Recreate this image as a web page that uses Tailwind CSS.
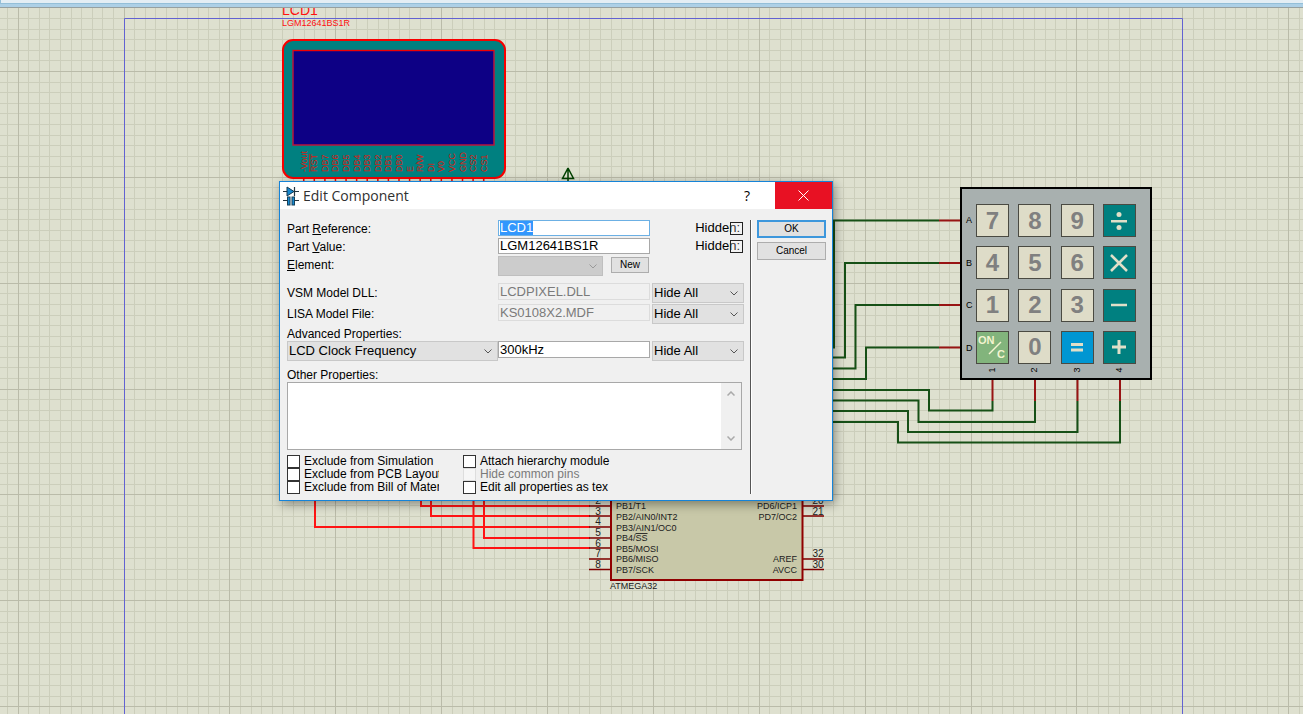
<!DOCTYPE html>
<html lang="en">
<head>
<meta charset="utf-8">
<title>Edit Component</title>
<script src="https://cdn.jsdelivr.net/npm/@tailwindcss/browser@4"></script>
</head>
<body class="flex h-screen flex-col overflow-hidden bg-[#dee0cf] font-['Liberation_Sans',sans-serif] text-black">
<header class="relative z-10 h-2 shrink-0 border-b border-[#96a0a0] bg-[#add0e6]"><div class="h-1 border-b border-l border-[#94bfd8] bg-[#e4eef4]"></div></header>

<main class="relative min-h-0 flex-1">
  <!-- schematic sheet: page coordinates, pulled up under the header strip -->
  <svg class="absolute inset-x-0 -top-2 h-[calc(100%+8px)] w-full" font-family="Liberation Sans, sans-serif">
    <g id="grid" shape-rendering="crispEdges"></g>
    <path d="M124.500 2000V18.500H1182.500V2000" fill="none" stroke="#6262d2"/>

    <!-- LCD -->
    <g fill="#ff1010">
      <text x="282" y="15" font-size="14">LCD1</text>
      <text x="282" y="26" font-size="9">LGM12641BS1R</text>
    </g>
    <rect x="283" y="40" width="222" height="138" rx="10" fill="#008080" stroke="#f80000" stroke-width="2"/>
    <rect x="293" y="50.500" width="201" height="94.500" fill="#0d0085" stroke="#b8143c" stroke-width="1.500"/>
    <path d="M293 50.500H494" stroke="#f00000"/>
    <g id="lcdpins" fill="#d81c14" font-size="9"></g>

    <!-- power terminal -->
    <path d="M568 182V168L562.500 178.500H573.500L568 168" fill="none" stroke="#004000" stroke-width="1.500"/>

    <!-- data wires to the controller -->
    <g fill="none" stroke="#ff1414" stroke-width="2">
      <path d="M421 495V506H590"/>
      <path d="M431 495V516H590" />
      <path d="M315 495V527H590"/>
      <path d="M484 495V538H590"/>
      <path d="M473.500 495V548H590"/>
    </g>
    <path d="M589 506H611M589 516H611M589 527H611M589 538H611M589 548H611M589 559H611M589 569.500H611M803 506H824M803 516H824M803 559H824M803 569.500H824" stroke="#800000" stroke-width="1.500"/>
    <rect x="611" y="480" width="191.500" height="100" fill="#c8c8a8" stroke="#900000" stroke-width="2"/>
    <g font-size="9" fill="#202020">
      <text x="616" y="509">PB1/T1</text>
      <text x="616" y="520">PB2/AIN0/INT2</text>
      <text x="616" y="531">PB3/AIN1/OC0</text>
      <text x="616" y="541">PB4/<tspan text-decoration="overline">SS</tspan></text>
      <text x="616" y="552">PB5/MOSI</text>
      <text x="616" y="562">PB6/MISO</text>
      <text x="616" y="573">PB7/SCK</text>
      <text x="610" y="589">ATMEGA32</text>
      <g text-anchor="end">
        <text x="797" y="509">PD6/ICP1</text>
        <text x="797" y="520">PD7/OC2</text>
        <text x="797" y="562">AREF</text>
        <text x="797" y="573">AVCC</text>
      </g>
      <g text-anchor="middle" font-size="10">
        <text x="598" y="504">2</text><text x="598" y="515">3</text><text x="598" y="525">4</text><text x="598" y="536">5</text><text x="598" y="547">6</text><text x="598" y="557">7</text><text x="598" y="568">8</text>
        <text x="818" y="504">20</text><text x="818" y="515">21</text><text x="818" y="557">32</text><text x="818" y="568">30</text>
      </g>
    </g>

    <!-- keypad wires -->
    <g fill="none" stroke="#165016" stroke-width="2">
      <path d="M939 220.500H834V347.500H825"/>
      <path d="M939 263H845V357.500H825"/>
      <path d="M939 305H855.500V368.500H825"/>
      <path d="M939 347.500H866V379H825"/>
      <path d="M825 390H929V410.500H992.500V401"/>
      <path d="M825 400.500H918.500V422H1035V401"/>
      <path d="M825 411H908V432H1077.500V401"/>
      <path d="M825 422H898V442.500H1120V401"/>
    </g>
    <path d="M939 220.500H961M939 263H961M939 305H961M939 347.500H961M992.500 379V401M1035 379V401M1077.500 379V401M1120 379V401" stroke="#981414" stroke-width="2"/>
  </svg>

  <!-- keypad -->
  <section aria-label="Keypad" class="absolute left-[960px] top-[179px] flex h-[193px] w-48 flex-col border-2 border-black bg-[#a8b0af] pt-[15px] text-[9px]">
    <div class="flex">
      <div class="flex h-40 w-3.5 flex-col justify-between pl-1 leading-8"><span>A</span><span>B</span><span>C</span><span>D</span></div>
      <div class="grid h-40 w-40 grid-cols-[repeat(4,33px)] grid-rows-[repeat(4,33px)] place-content-between text-2xl font-bold leading-none text-[#808080] *:flex *:items-center *:justify-center *:border *:border-[#4a4a42]">
        <button class="bg-[#dedcc8]">7</button><button class="bg-[#dedcc8]">8</button><button class="bg-[#dedcc8]">9</button>
        <button class="bg-[#008080]" aria-label="Divide"><svg width="18" height="20" viewBox="0 0 18 20" fill="#e0dfc8"><circle cx="9" cy="3.500" r="2.500"/><rect x="1" y="9" width="16" height="2.500"/><circle cx="9" cy="16.500" r="2.500"/></svg></button>
        <button class="bg-[#dedcc8]">4</button><button class="bg-[#dedcc8]">5</button><button class="bg-[#dedcc8]">6</button>
        <button class="bg-[#008080]" aria-label="Multiply"><svg width="18" height="18" viewBox="0 0 18 18"><path d="M1 1L17 17M17 1L1 17" stroke="#e0dfc8" stroke-width="2.500"/></svg></button>
        <button class="bg-[#dedcc8]">1</button><button class="bg-[#dedcc8]">2</button><button class="bg-[#dedcc8]">3</button>
        <button class="bg-[#008080]" aria-label="Subtract"><svg width="18" height="18" viewBox="0 0 18 18"><path d="M1 9H17" stroke="#e0dfc8" stroke-width="2.500"/></svg></button>
        <button class="bg-[#82b47c]" aria-label="On / Clear"><svg width="31" height="31" viewBox="0 0 31 31" fill="#f4f4d0" font-family="Liberation Sans, sans-serif"><text x="1" y="12" font-size="11" font-weight="bold">ON</text><text x="20" y="26" font-size="11" font-weight="bold">C</text><path d="M12 22L24 10" stroke="#f4f4d0" stroke-width="1.500"/></svg></button>
        <button class="bg-[#dedcc8]">0</button>
        <button class="bg-[#0096d2]" aria-label="Equals"><svg width="12" height="12" viewBox="0 0 12 12"><path d="M0 3.500H12M0 9H12" stroke="#e0dfc8" stroke-width="3"/></svg></button>
        <button class="bg-[#008080]" aria-label="Add"><svg width="16" height="16" viewBox="0 0 16 16"><path d="M1 8H15M8 1V15" stroke="#e0dfc8" stroke-width="3"/></svg></button>
      </div>
    </div>
    <div class="ml-3.5 flex w-40 justify-between *:flex *:h-3 *:w-[33px] *:-rotate-90 *:items-center *:justify-center"><span>1</span><span>2</span><span>3</span><span>4</span></div>
  </section>

  <!-- dialog window -->
  <form role="dialog" aria-labelledby="title" class="absolute left-[279px] top-[173px] flex h-80 w-[554px] flex-col border border-[#1583d8] bg-[#f0f0f0] text-[13px] leading-4 shadow-[2px_3px_10px_rgba(0,0,0,0.4)]">
    <div class="flex h-[27px] shrink-0 items-center bg-white pl-[3px]">
      <svg width="16" height="20" viewBox="0 0 16 20" aria-hidden="true"><path d="M0 5.500H16M0 14.500H16M11.500 1V10" stroke="#243540" stroke-width="1.200"/><path d="M4 1L11 5.500L4 10Z" fill="#1688d0" stroke="#123850"/><path d="M8 11V19" stroke="#fff" stroke-width="3"/><rect x="4.500" y="11" width="2.500" height="8" fill="#1688d0" stroke="#174058"/><rect x="9" y="11" width="2.500" height="8" fill="#1688d0" stroke="#174058"/></svg>
      <h1 id="title" class="ml-1 flex-1 font-['Open_Sans',sans-serif] text-sm leading-5 text-[#303030]">Edit Component</h1>
      <button type="button" aria-label="Help" class="h-full w-14 font-['Open_Sans',sans-serif] text-sm">?</button>
      <button type="button" aria-label="Close" class="flex h-full w-[57px] items-center justify-center bg-[#e81123]"><svg width="11" height="11" viewBox="0 0 11 11"><path d="M.5 .5L10.500 10.500M10.500 .5L.5 10.500" stroke="#fff"/></svg></button>
    </div>

    <div class="flex flex-1 pb-1.5 pl-[7px] pr-1.5 pt-[11px]">
      <div class="w-[457px]">
        <div class="grid grid-cols-[211px_152px_1fr] items-start">
          <label for="ref" class="pt-px text-xs leading-4">Part <u>R</u>eference:</label>
          <input id="ref" value="LCD1" class="mb-0.5 h-4 w-full border border-[#6cb0e4] bg-white px-px outline-none selection:bg-[#3297fd] selection:text-white">
          <label class="flex justify-end pr-px">Hidden:<input type="checkbox" class="-ml-2.5 mt-0.5 size-[13px] appearance-none border border-[#222] bg-white/20"></label>

          <label for="val" class="pt-px text-xs leading-4">Part <u>V</u>alue:</label>
          <input id="val" value="LGM12641BS1R" class="mb-0.5 h-4 w-full border border-[#a8a8a8] bg-white px-px outline-none">
          <label class="flex justify-end pr-px">Hidden:<input type="checkbox" class="-ml-2.5 mt-0.5 size-[13px] appearance-none border border-[#222] bg-white/20"></label>

          <label for="elem" class="pt-px text-xs leading-4"><u>E</u>lement:</label>
          <div class="flex items-start gap-2">
            <div class="relative"><select id="elem" disabled class="block h-5 w-[105px] appearance-none border border-[#bfbfbf] bg-[#ccc]"><option></option></select><svg class="pointer-events-none absolute right-1.5 top-2" width="8" height="5" viewBox="0 0 8 5" fill="none" stroke="#999"><path d="M.5 .5L4 4L7.500 .5"/></svg></div>
            <button type="button" class="mt-px h-4 w-[38px] border border-[#adadad] bg-[#e1e1e1] text-[10px] leading-3">New</button>
          </div>
          <span></span>
        </div>

        <div class="mt-[7px] grid grid-cols-[211px_152px_2px_1fr] items-start gap-y-px">
          <label for="dll" class="pt-0.5 text-xs leading-4">VSM Model DLL:</label>
          <input id="dll" disabled value="LCDPIXEL.DLL" class="h-[17px] w-full border border-[#dcdcdc] px-px text-[#7a7a7a]">
          <span></span>
          <div class="relative"><select aria-label="DLL visibility" class="block h-5 w-full appearance-none border border-[#c8c8c8] bg-[#e1e1e1] px-px"><option>Hide All</option></select><svg class="pointer-events-none absolute right-1.5 top-2" width="8" height="5" viewBox="0 0 8 5" fill="none" stroke="#555"><path d="M.5 .5L4 4L7.500 .5"/></svg></div>

          <label for="mdf" class="pt-0.5 text-xs leading-4">LISA Model File:</label>
          <input id="mdf" disabled value="KS0108X2.MDF" class="h-[17px] w-full border border-[#dcdcdc] px-px text-[#7a7a7a]">
          <span></span>
          <div class="relative"><select aria-label="Model file visibility" class="block h-5 w-full appearance-none border border-[#c8c8c8] bg-[#e1e1e1] px-px"><option>Hide All</option></select><svg class="pointer-events-none absolute right-1.5 top-2" width="8" height="5" viewBox="0 0 8 5" fill="none" stroke="#555"><path d="M.5 .5L4 4L7.500 .5"/></svg></div>
        </div>

        <label for="adv" class="mt-0.5 block h-[15px] text-xs leading-4">Advanced Properties:</label>
        <div class="grid grid-cols-[211px_152px_2px_1fr] items-start">
          <div class="relative"><select id="adv" class="block h-5 w-full appearance-none border border-[#c8c8c8] bg-[#e1e1e1] px-px"><option>LCD Clock Frequency</option></select><svg class="pointer-events-none absolute right-1.5 top-2" width="8" height="5" viewBox="0 0 8 5" fill="none" stroke="#555"><path d="M.5 .5L4 4L7.500 .5"/></svg></div>
          <input aria-label="Property value" value="300kHz" class="h-[17px] w-full border border-[#a8a8a8] bg-white px-px outline-none">
          <span></span>
          <div class="relative"><select aria-label="Property visibility" class="block h-5 w-full appearance-none border border-[#c8c8c8] bg-[#e1e1e1] px-px"><option>Hide All</option></select><svg class="pointer-events-none absolute right-1.5 top-2" width="8" height="5" viewBox="0 0 8 5" fill="none" stroke="#555"><path d="M.5 .5L4 4L7.500 .5"/></svg></div>
        </div>

        <label for="other" class="mt-1.5 block h-[13px] overflow-hidden text-xs leading-4">Other Properties:</label>
        <div class="mr-0.5 mt-0.5 flex h-[68px] border border-[#a8a8a8] bg-white">
          <textarea id="other" class="h-full flex-1 resize-none px-px outline-none"></textarea>
          <div class="flex w-5 flex-col items-center justify-between bg-[#f0f0f0] py-2"><svg width="8" height="5" viewBox="0 0 8 5" fill="none" stroke="#aaa" stroke-width="1.500"><path d="M.5 4.500L4 1L7.500 4.500"/></svg><svg width="8" height="5" viewBox="0 0 8 5" fill="none" stroke="#aaa" stroke-width="1.500"><path d="M.5 .5L4 4L7.500 .5"/></svg></div>
        </div>

        <div class="mt-[5px] grid grid-flow-col grid-cols-[152px_152px] grid-rows-3 gap-x-6 text-xs leading-[13px] *:flex *:h-[13px] *:gap-1 *:overflow-hidden *:whitespace-nowrap">
          <label><input type="checkbox" class="size-[13px] shrink-0 appearance-none border border-[#333] bg-white">Exclude from Simulation</label>
          <label><input type="checkbox" class="size-[13px] shrink-0 appearance-none border border-[#333] bg-white">Exclude from PCB Layout</label>
          <label><input type="checkbox" class="size-[13px] shrink-0 appearance-none border border-[#333] bg-white">Exclude from Bill of Materials</label>
          <label><input type="checkbox" class="size-[13px] shrink-0 appearance-none border border-[#333] bg-white">Attach hierarchy module</label>
          <label class="text-[#7a7a7a]"><input type="checkbox" disabled class="size-[13px] shrink-0 appearance-none border border-[#ddd] bg-[#f6f6f6]">Hide common pins</label>
          <label><input type="checkbox" class="size-[13px] shrink-0 appearance-none border border-[#333] bg-white">Edit all properties as tex</label>
        </div>
      </div>

      <div class="ml-1.5 border-l border-r border-l-[#555] border-r-white"></div>
      <div class="ml-[5px] flex flex-1 flex-col gap-1 text-[10px] leading-3">
        <button type="submit" class="h-[18px] border-2 border-[#3d97dc] bg-[#e1e1e1]">OK</button>
        <button type="button" class="h-[18px] border border-[#adadad] bg-[#e1e1e1]">Cancel</button>
      </div>
    </div>
  </form>
</main>

<script>
  const NS = 'http://www.w3.org/2000/svg';
  const add = (parent, tag, attrs, text) => {
    const e = document.createElementNS(NS, tag);
    for (const k in attrs) e.setAttribute(k, attrs[k]);
    if (text) e.textContent = text;
    parent.appendChild(e);
  };
  // one sheet unit is 10.587 px; every tenth line is heavier
  const grid = document.getElementById('grid'), step = 10.587;
  for (const heavy of [false, true]) {
    for (let i = -2; i < 400; i++) {
      if ((i % 10 === 0) !== heavy) continue;
      const fill = heavy ? '#babba9' : '#cccebb';
      add(grid, 'rect', {x: Math.floor(18.2 + i * step), y: 0, width: 1, height: '100%', fill});
    }
    for (let i = -7; i < 400; i++) {
      if ((i % 10 === 0) !== heavy) continue;
      const fill = heavy ? '#babba9' : '#cccebb';
      add(grid, 'rect', {x: 0, y: Math.floor(71.5 + i * step), width: '100%', height: 1, fill});
    }
  }
  const pins = document.getElementById('lcdpins');
  ['-Vout','RST','DB7','DB6','DB5','DB4','DB3','DB2','DB1','DB0','E','R/W','DI','V0','VCC','GND','CS2','CS1'].forEach((name, i) => {
    const x = 303.7 + i * step;
    add(pins, 'path', {d: `M${x} 178V183`, stroke: '#f00000', 'stroke-width': 1.5});
    add(pins, 'text', {transform: `translate(${x + 3} 172) rotate(-90)`, 'text-decoration': name === 'RST' ? 'overline' : 'none'}, name);
  });
  const ref = document.getElementById('ref');
  ref.focus();
  ref.select();
</script>
</body>
</html>
